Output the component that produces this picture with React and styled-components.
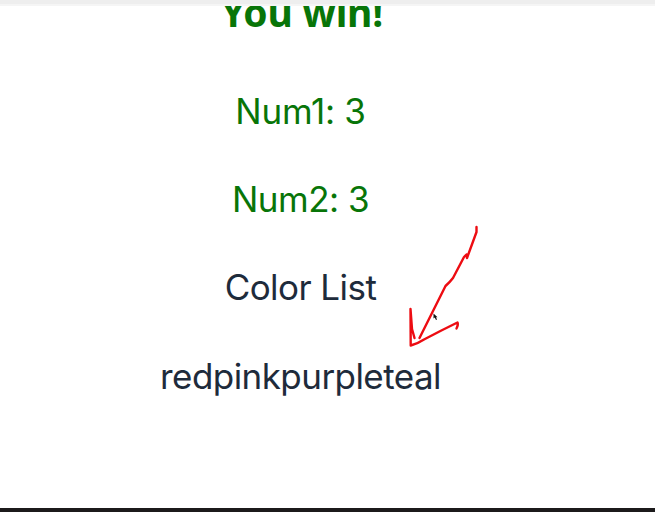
import React from 'react';
import styled, { createGlobalStyle } from 'styled-components';

const GlobalStyle = createGlobalStyle`
  body { margin: 0; background: #fff; }
`;
const Page = styled.div`
  position: relative;
  display: flex;
  flex-direction: column;
  height: 512px;
  overflow: hidden;
  background: #fff;
  font-family: Inter, sans-serif;
`;
const TopBar = styled.div`
  height: 4px;
  border-bottom: 2px solid #f5f5f5;
  background: #eee;
  flex: none;
`;
const Content = styled.main`
  flex: 1;
  min-height: 0;
  overflow: hidden;
  width: 601px;
  text-align: center;
`;
const Title = styled.h1`
  margin: -18px 0 48.5px;
  padding-left: 3px;
  font-family: 'Noto Sans', sans-serif;
  font-size: 39px;
  letter-spacing: -0.2px;
  line-height: 48px;
  color: #087508;
`;
const Line = styled.p`
  margin: 0 0 35.4px;
  font-size: 35px;
  line-height: 53px;
  letter-spacing: ${(p) => p.$tracking ?? '-0.55px'};
  white-space: nowrap;
  color: ${(p) => (p.$win ? '#087508' : '#1e2b3b')};
`;
const BottomBar = styled.div`height: 4px; background: #1c1a1b; flex: none;`;
const Arrow = styled.svg`
  position: absolute;
  left: 0;
  top: 0;
  fill: none;
  stroke: #ed0c12;
  stroke-width: 2.4;
  stroke-linecap: round;
  stroke-linejoin: round;
`;
const Pointer = styled.path`
  fill: #111;
  stroke: none;
`;

export default function App() {
  return (
    <Page>
      <GlobalStyle />
      <TopBar />
      <Content>
        <Title>You win!</Title>
        <Line $win $tracking="-0.25px">Num1: 3</Line>
        <Line $win $tracking="-0.5px">Num2: 3</Line>
        <Line>Color List</Line>
        <Line>redpinkpurpleteal</Line>
      </Content>
      <BottomBar />
      <Arrow width="655" height="512" viewBox="0 0 655 512">
        <path d="M476.500 227V232L467 258L466.500 254.500L464 257L453 278Q450 282 445.500 286L434 309L419.500 338" />
        <path d="M414.500 338L412 329L410.500 309L410.700 345.500Q418 343.500 424 339.500Q442 330 457.500 322.500Q458.500 325 456.500 328.500" />
        <Pointer d="M433.500 313.500V318.500L434.700 317.500L436 320L437 319.500L436 317.200H437.500Z" />
      </Arrow>
    </Page>
  );
}
